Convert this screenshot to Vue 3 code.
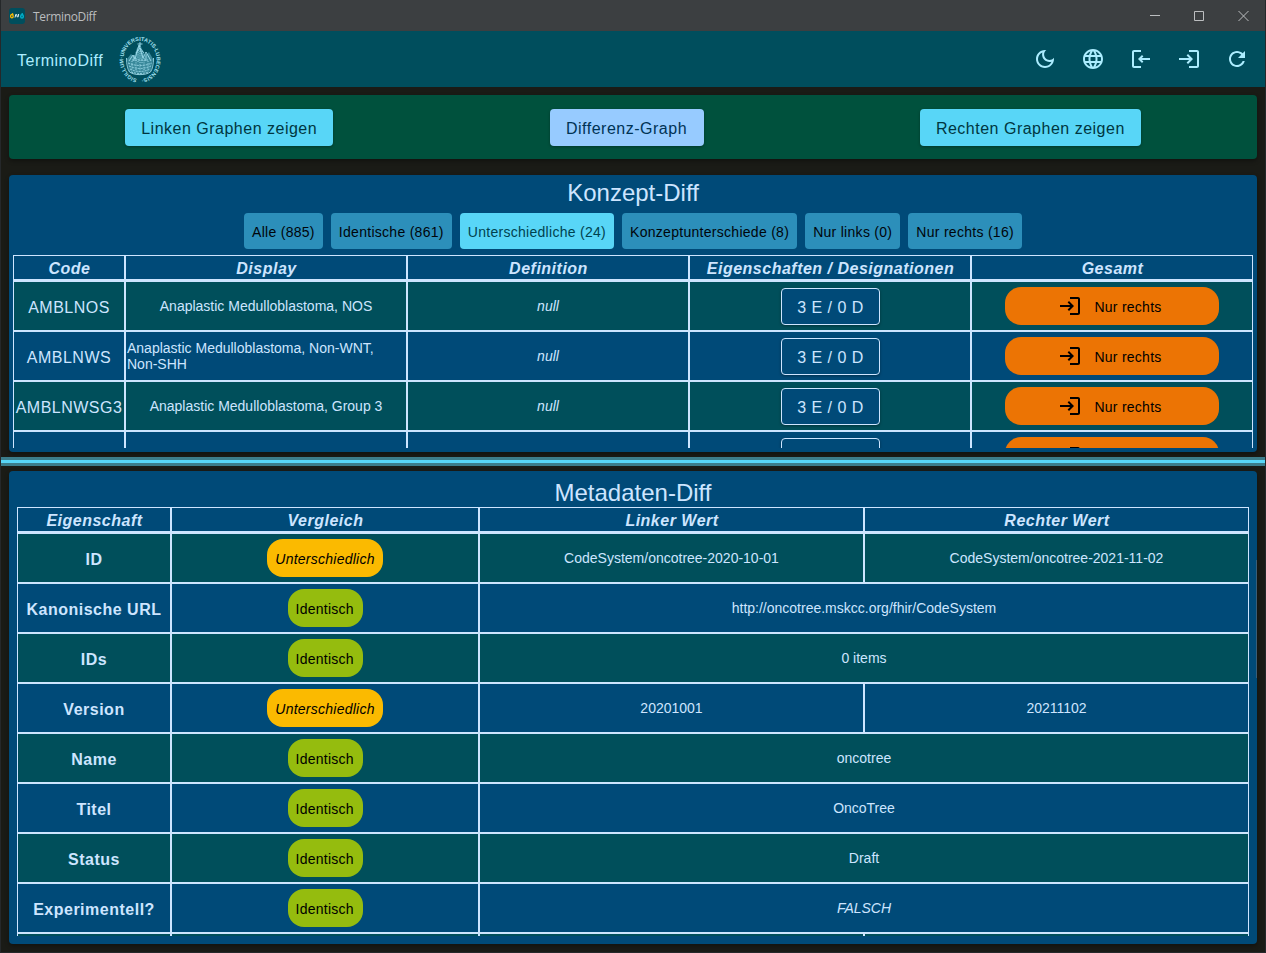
<script setup>
const chips = [
  { label: 'Alle (885)' },
  { label: 'Identische (861)' },
  { label: 'Unterschiedliche (24)', active: true },
  { label: 'Konzeptunterschiede (8)' },
  { label: 'Nur links (0)' },
  { label: 'Nur rechts (16)' },
]

const conceptHeaders = ['Code', 'Display', 'Definition', 'Eigenschaften / Designationen', 'Gesamt']
const concepts = [
  { code: 'AMBLNOS', display: 'Anaplastic Medulloblastoma, NOS' },
  { code: 'AMBLNWS', display: 'Anaplastic Medulloblastoma, Non-WNT, Non-SHH' },
  { code: 'AMBLNWSG3', display: 'Anaplastic Medulloblastoma, Group 3' },
  { code: '', display: '', partial: true },
]

const metaHeaders = ['Eigenschaft', 'Vergleich', 'Linker Wert', 'Rechter Wert']
const metadata = [
  { name: 'ID', values: ['CodeSystem/oncotree-2020-10-01', 'CodeSystem/oncotree-2021-11-02'] },
  { name: 'Kanonische URL', values: ['http://oncotree.mskcc.org/fhir/CodeSystem'] },
  { name: 'IDs', values: ['0 items'] },
  { name: 'Version', values: ['20201001', '20211102'] },
  { name: 'Name', values: ['oncotree'] },
  { name: 'Titel', values: ['OncoTree'] },
  { name: 'Status', values: ['Draft'] },
  { name: 'Experimentell?', values: ['FALSCH'], italic: true },
]

const loginPath =
  'M11 7 9.6 8.4l2.6 2.6H2v2h10.2l-2.6 2.6L11 17l5-5-5-5zm9 12h-8v2h8c1.1 0 2-.9 2-2V5c0-1.1-.9-2-2-2h-8v2h8v14z'

const actions = [
  'M9.37 5.51C9.19 6.15 9.1 6.82 9.1 7.5c0 4.08 3.32 7.4 7.4 7.4.68 0 1.35-.09 1.99-.27C17.45 17.19 14.93 19 12 19c-3.86 0-7-3.14-7-7 0-2.93 1.81-5.45 4.37-6.49zM12 3c-4.97 0-9 4.03-9 9s4.03 9 9 9 9-4.03 9-9c0-.46-.04-.92-.1-1.36-.98 1.37-2.58 2.26-4.4 2.26-2.98 0-5.4-2.42-5.4-5.4 0-1.81.89-3.42 2.26-4.4-.44-.06-.9-.1-1.36-.1z',
  'M11.99 2C6.47 2 2 6.48 2 12s4.47 10 9.99 10C17.52 22 22 17.52 22 12S17.52 2 11.99 2zm6.93 6h-2.95c-.32-1.25-.78-2.45-1.38-3.56 1.84.63 3.37 1.91 4.33 3.56zM12 4.04c.83 1.2 1.48 2.53 1.91 3.96h-3.82c.43-1.43 1.08-2.76 1.91-3.96zM4.26 14C4.1 13.36 4 12.69 4 12s.1-1.36.26-2h3.38c-.08.66-.14 1.32-.14 2s.06 1.34.14 2H4.26zm.82 2h2.95c.32 1.25.78 2.45 1.38 3.56-1.84-.63-3.37-1.9-4.33-3.56zm2.95-8H5.08c.96-1.66 2.49-2.93 4.33-3.56C8.81 5.55 8.35 6.75 8.03 8zM12 19.96c-.83-1.2-1.48-2.53-1.91-3.96h3.82c-.43 1.43-1.08 2.76-1.91 3.96zM14.34 14H9.66c-.09-.66-.16-1.32-.16-2s.07-1.35.16-2h4.68c.09.65.16 1.32.16 2s-.07 1.34-.16 2zm.25 5.56c.6-1.11 1.06-2.31 1.38-3.56h2.95c-.96 1.65-2.49 2.93-4.33 3.56zM16.36 14c.08-.66.14-1.32.14-2s-.06-1.34-.14-2h3.38c.16.64.26 1.31.26 2s-.1 1.36-.26 2h-3.38z',
  'M5 5h7V3H5c-1.1 0-2 .9-2 2v14c0 1.1.9 2 2 2h7v-2H5zM13 8l-4 4 4 4 1.4-1.4-1.6-1.6H21v-2h-8.2l1.6-1.6z',
  loginPath,
  'M17.65 6.35C16.2 4.9 14.21 4 12 4c-4.42 0-7.99 3.58-7.99 8s3.57 8 7.99 8c3.73 0 6.84-2.55 7.73-6h-2.08c-.82 2.33-3.04 4-5.65 4-3.31 0-6-2.69-6-6s2.69-6 6-6c1.66 0 3.14.69 4.22 1.78L13 11h7V4l-2.35 2.35z',
]
</script>

<template>
  <div class="window">
    <header class="titlebar">
      <svg class="app-icon" width="16" height="16" viewBox="0 0 16 16">
        <rect width="16" height="16" rx="3" fill="#004e5d" />
        <ellipse cx="2.9" cy="8.2" rx="1.3" ry="1.7" fill="none" stroke="#fbba00" stroke-width="1.3" />
        <path d="M3.4 5.2 3.9 6.8" stroke="#fbba00" stroke-width="1.2" />
        <path d="M6 9.500 6.900 6.200M7.6 6.2 8.300 9.200M9 9.200 9.700 6" stroke="#e3f4f8" stroke-width="1" fill="none" />
        <ellipse cx="13" cy="8.4" rx="1.3" ry="1.7" fill="none" stroke="#00b0cc" stroke-width="1.5" />
        <path d="M13.200 7V5" stroke="#00b0cc" stroke-width="1.3" />
      </svg>
      <span class="window-name">TerminoDiff</span>
      <svg class="controls" width="100" height="12" viewBox="0 0 100 12" fill="none" stroke="#bcbec0">
        <path d="M0 5.5h10M44.5 1.5h9v9h-9zM88.5 1l10 10M98.5 1l-10 10" />
      </svg>
    </header>

    <nav class="appbar">
      <span class="brand">TerminoDiff</span>
      <svg class="seal" width="44" height="50" viewBox="0 0 44 50">
        <defs>
          <path id="sealRing" d="M22 44.2A16.7 19.2 0 1 1 22.01 44.2" />
        </defs>
        <text class="seal-text">
          <textPath href="#sealRing" startOffset="3" textLength="108">SIGILLUM·UNIVERSITATIS·LUBECENSIS·</textPath>
        </text>
        <path fill="#4d9db0" d="M9 24l4-5 3 3 3-9 3-4 2 5 3 7 4-4 4 7-2 12q-11 6-22 0z" opacity=".75" />
        <g stroke="#a0dcec" fill="none" stroke-width=".9">
          <path d="M8.500 23c0 6 1 11 3 14 5 3.500 16 3.500 21 0 2-3 3-8 3-14" />
          <path d="M11 26l4-6 2 4 4-14 4 13 3-6 5 9M22 7v5M19.5 9h5M18 18l4-5 4 5M16 20v6M28 19v7" />
          <path stroke-dasharray="2 1" d="M10 28q12 5 24 0M11 31q11 5 22 0M12 34q10 5 20 0M13 37q9 3 18 0M14 25h16" />
          <path stroke-dasharray="1 1.2" d="M20 15v12M22 16v20M24 16v12M18 23v13M26 23v13M14 26v9M30 26v9" />
        </g>
      </svg>
      <div class="actions">
        <svg v-for="(d, i) in actions" :key="i" width="24" height="24" viewBox="0 0 24 24"><path :d="d" /></svg>
      </div>
    </nav>

    <main class="content">
      <section class="graph-bar">
        <button class="graph-btn">Linken Graphen zeigen</button>
        <button class="graph-btn diff">Differenz-Graph</button>
        <button class="graph-btn">Rechten Graphen zeigen</button>
      </section>

      <section class="panel concept">
        <h2>Konzept-Diff</h2>
        <div class="chips">
          <button v-for="c in chips" :key="c.label" class="chip" :class="{ active: c.active }">{{ c.label }}</button>
        </div>
        <div class="table">
          <div class="row head concept-cols">
            <div v-for="h in conceptHeaders" :key="h" class="cell">{{ h }}</div>
          </div>
          <div v-for="(c, i) in concepts" :key="i" class="row concept-cols">
            <div class="cell code">{{ c.code }}</div>
            <div class="cell"><span class="value">{{ c.display }}</span></div>
            <div class="cell"><span v-if="!c.partial" class="value italic">null</span></div>
            <div class="cell"><button class="counts"><template v-if="!c.partial">3 E / 0 D</template></button></div>
            <div class="cell">
              <div class="pill side">
                <svg width="24" height="24" viewBox="0 0 24 24"><path :d="loginPath" /></svg>
                <span v-if="!c.partial">Nur rechts</span>
                <span v-else class="pill-gap"></span>
              </div>
            </div>
          </div>
        </div>
      </section>
    </main>

    <div class="splitter"></div>

    <section class="panel meta">
      <h2>Metadaten-Diff</h2>
      <div class="table">
        <div class="row head meta-cols">
          <div v-for="h in metaHeaders" :key="h" class="cell">{{ h }}</div>
        </div>
        <div v-for="m in metadata" :key="m.name" class="row meta-cols">
          <div class="cell name">{{ m.name }}</div>
          <div class="cell">
            <span class="pill" :class="m.values.length > 1 ? 'different' : 'same'">{{
              m.values.length > 1 ? 'Unterschiedlich' : 'Identisch'
            }}</span>
          </div>
          <div v-for="v in m.values" :key="v" class="cell" :class="{ wide: m.values.length === 1 }">
            <span class="value" :class="{ italic: m.italic }">{{ v }}</span>
          </div>
        </div>
        <div class="row meta-cols">
          <div v-for="n in 4" :key="n" class="cell"></div>
        </div>
      </div>
      <div class="scroll-thumb"></div>
    </section>
  </div>
</template>

<style>
body {
  background: #1a1c18;
  overflow: hidden;
}
</style>

<style scoped>
* {
  box-sizing: border-box;
}
.window {
  width: 1266px;
  height: 953px;
  display: flex;
  flex-direction: column;
  overflow: hidden;
  background: #1a1b16;
  border: solid #25282a;
  border-width: 0 1px 1px;
  font-family: "Liberation Sans", Arial, sans-serif;
  font-size: 16px;
  letter-spacing: 0.5px;
  color: #cde5ff;
}
button {
  font: inherit;
  letter-spacing: inherit;
  border: 0;
  margin: 0;
  padding: 0;
  white-space: nowrap;
}
.titlebar {
  flex: none;
  height: 31px;
  display: flex;
  align-items: center;
  padding: 1px 15px 0 8px;
  background: #3c3f41;
}
.window-name {
  margin-left: 8px;
  padding-top: 1px;
  font: 12px/16px "Open Sans", "Noto Sans", sans-serif;
  letter-spacing: -0.35px;
  color: #bbbdbf;
}
.controls {
  margin-left: auto;
}
.appbar {
  flex: none;
  height: 56px;
  display: flex;
  align-items: center;
  padding: 0 16px;
  background: #004e5d;
  color: #acedff;
}
.brand {
  padding-top: 3px;
}
.seal {
  margin: 2px 0 0 15px;
}
.seal-text {
  font: bold 5.4px "Liberation Sans", sans-serif;
  letter-spacing: 0;
  fill: #a6e4f4;
}
.actions {
  margin-left: auto;
  display: flex;
  gap: 24px;
  fill: #acedff;
}
.content {
  flex: none;
  padding: 8px 8px 0;
}
.graph-bar {
  height: 64px;
  padding: 0 8px;
  display: flex;
  justify-content: space-around;
  align-items: center;
  border-radius: 4px;
  background: #00513d;
  box-shadow: 0 2px 4px rgba(0, 0, 0, 0.35);
}
.graph-btn {
  height: 37px;
  padding: 3px 16px 0;
  border-radius: 4px;
  background: #58d6f7;
  color: #003641;
  box-shadow: 0 1px 3px rgba(0, 0, 0, 0.3);
}
.graph-btn.diff {
  width: 154px;
  background: #97cbff;
  color: #003355;
}
.panel {
  border-radius: 4px;
  background: #004a78;
  overflow: hidden;
  box-shadow: 0 2px 4px rgba(0, 0, 0, 0.35);
}
h2 {
  margin: 0;
  font-weight: 400;
  font-size: 24px;
  line-height: 28px;
  letter-spacing: 0;
  text-align: center;
}
.concept {
  height: 277px;
  margin-top: 16px;
  padding: 4px;
}
.chips {
  display: flex;
  justify-content: center;
  gap: 8px;
  margin: 6px 0;
}
.chip {
  height: 36px;
  padding: 2px 8px 0;
  border-radius: 4px;
  background: #2c8fba;
  color: #00050a;
  font-size: 14px;
  letter-spacing: 0.285px;
}
.chip.active {
  background: #58d6f7;
  color: #00424f;
}
.table {
  overflow: hidden;
}
.concept .table {
  height: 193px;
}
.meta .table {
  height: 429px;
}
.row {
  display: grid;
  height: 50px;
}
.concept-cols {
  grid-template-columns: 112px repeat(4, 282px);
}
.meta-cols {
  grid-template-columns: 154px 308px 385px 385px;
}
.cell {
  display: flex;
  align-items: center;
  justify-content: center;
  border: 1px solid #cde5ff;
  min-width: 0;
}
.row:nth-child(even) .cell {
  background: #004f5b;
}
.head {
  height: 26px;
  font-weight: 700;
  font-style: italic;
}
.head .cell {
  border-bottom-width: 2px;
  padding: 2px 0 0 1px;
}
.wide {
  grid-column: span 2;
}
.code,
.name {
  padding-top: 3px;
}
.name {
  font-weight: 700;
}
.value {
  font-size: 14px;
  line-height: 16px;
  letter-spacing: 0;
  padding: 0 1px;
}
.italic {
  font-style: italic;
}
.counts {
  width: 99px;
  height: 37px;
  margin-top: 1px;
  padding: 2px 0 0 1px;
  border: 1px solid #cde5ff;
  border-radius: 4px;
  background: #004a78;
  color: #cde5ff;
  box-shadow: 0 1px 3px rgba(0, 0, 0, 0.35);
}
.pill {
  height: 38px;
  display: flex;
  align-items: center;
  border-radius: 16px;
  padding: 2px 8px 0;
  font-size: 14px;
  letter-spacing: 0.25px;
  color: #000;
}
.pill.same {
  width: 75px;
  background: #95bc0e;
}
.pill.different {
  background: #fbba00;
  font-style: italic;
}
.pill.side {
  width: 214px;
  padding: 0 4px 0 0;
  justify-content: center;
  gap: 12px;
  background: #ec7404;
}
.side span {
  padding-top: 2px;
}
.pill-gap {
  width: 68px;
}
.splitter {
  flex: none;
  height: 9px;
  margin: 5px 0;
  border: solid #3b7d8b;
  border-width: 3px 0;
  background: #58d6f7;
}
.meta {
  position: relative;
  flex: none;
  height: 473px;
  margin: 0 8px;
  padding: 8px;
}
.scroll-thumb {
  position: absolute;
  right: 0;
  top: 89px;
  width: 1px;
  height: 118px;
  background: #3a5d78;
}
</style>
